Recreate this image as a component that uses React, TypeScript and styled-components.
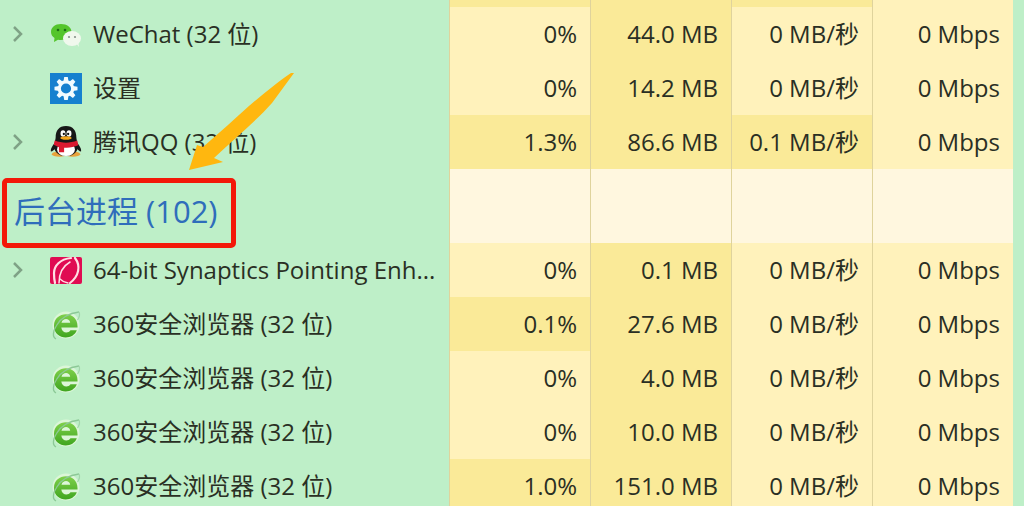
import React from "react";
import styled, { createGlobalStyle } from "styled-components";

const GlobalStyle = createGlobalStyle`
  * { box-sizing: border-box; }
  body {
    margin: 0;
    background: #beefc8;
    color: #2a2f24;
    font-family: "Open Sans", "Noto Sans CJK SC", sans-serif;
  }
`;

const heat = { none: "#fff7df", low: "#fff2bb", high: "#faea98" };
type Heat = keyof typeof heat;

const Window = styled.main`
  height: 100vh;
  padding-right: 11px;
  overflow: hidden;
`;

const Table = styled.table`
  width: 100%;
  table-layout: fixed;
  border-collapse: separate;
  border-spacing: 0;
  font-size: 24px;
  line-height: 30px;
  white-space: nowrap;
`;

const NameCol = styled.col``;
const ValueCol = styled.col`
  width: 141px;
`;

const Row = styled.tr<{ $height: number }>`
  height: ${(p) => p.$height}px;
`;

const NameCell = styled.td`
  padding: 0;
`;

const Name = styled.div`
  display: flex;
  align-items: center;
  padding-left: 8px;
`;

const ValueCell = styled.td<{ $heat: Heat }>`
  padding: 0 13px 0 0;
  text-align: right;
  background: ${(p) => heat[p.$heat]};
  border-left: 1px solid #dfd39c;
`;

const SpacerCell = styled.td<{ $heat: Heat }>`
  padding: 0;
  background: ${(p) => heat[p.$heat]};
  border-left: 1px solid #dfd39c;
`;

const Expander = styled.button`
  display: flex;
  align-items: center;
  justify-content: center;
  width: 20px;
  height: 30px;
  padding: 0;
  border: 0;
  background: none;
  color: #7fa286;
`;

const ExpanderSpace = styled.span`
  width: 20px;
`;

const IconBox = styled.span`
  display: flex;
  width: 32px;
  height: 32px;
  margin: 0 11px 0 22px;
`;

const GroupCell = styled.td`
  position: relative;
  padding: 10px 0 0 14px;
`;

const GroupTitle = styled.h2`
  margin: 0;
  font-size: 31px;
  line-height: 42px;
  font-weight: 400;
  color: #2f6dbb;
`;

const Highlight = styled.div`
  position: absolute;
  top: 9px;
  left: 2px;
  width: 234px;
  height: 70px;
  border: 5px solid #f31809;
  border-radius: 5px;
  pointer-events: none;
`;

const Pointer = styled.svg`
  position: absolute;
  top: -98px;
  left: 188px;
  pointer-events: none;
`;

const WeChatIcon = () => (
  <svg width="32" height="32" viewBox="0 0 32 32" aria-hidden="true">
    <path d="M11 6C5 6 1 9.500 1 14c0 2.500 1.300 4.500 3.500 6L4 24l4-2.300c7 1.300 13.500-2 13.500-7.700C21.500 9.500 17 6 11 6z" fill="#54c52c" />
    <ellipse cx="22" cy="20.500" rx="9" ry="7.500" fill="#f0f8ed" />
    <path d="M26 25l3 4-1-6z" fill="#f0f8ed" />
    <circle cx="8" cy="12" r="1.300" fill="#1d6d16" />
    <circle cx="15" cy="12" r="1.300" fill="#1d6d16" />
    <circle cx="19" cy="19" r="1.100" fill="#87938a" />
    <circle cx="25" cy="19" r="1.100" fill="#87938a" />
  </svg>
);

const SettingsIcon = () => (
  <svg width="32" height="32" viewBox="0 0 32 32" aria-hidden="true">
    <path d="M0 1h32v31H0z" fill="#1680cf" />
    <g transform="translate(16 16.500)">
      {[0, 45, 90, 135, 180, 225, 270, 315].map((a) => (
        <path key={a} d="M-1.800-11.500h3.600l.7 4.500h-5z" fill="#f2fbff" transform={`rotate(${a})`} />
      ))}
      <circle r="6.700" fill="none" stroke="#f2fbff" strokeWidth="3.200" />
    </g>
  </svg>
);

const QQIcon = () => (
  <svg width="32" height="32" viewBox="-1 0 34 34" aria-hidden="true">
    <ellipse cx="9" cy="30" rx="8" ry="2.800" fill="#e8a23c" />
    <ellipse cx="23" cy="30" rx="8" ry="2.800" fill="#e8a23c" />
    <path d="M5 17C1 21-.5 25 0 27c1.500 0 4-2 5-4zM27 17c4 4 5.500 8 5 10-1.500 0-4-2-5-4z" fill="#171717" />
    <path d="M16 0C8.500 0 5 5 5 12c0 2-1 4-1 7-2 7 3 13 12 13s14-6 12-13c0-3-1-5-1-7 0-7-3.500-12-11-12z" fill="#171717" />
    <ellipse cx="16" cy="25" rx="9.500" ry="7" fill="#fff" />
    <ellipse cx="12.800" cy="8" rx="2.600" ry="3.400" fill="#fff" />
    <ellipse cx="19.200" cy="8" rx="2.600" ry="3.400" fill="#fff" />
    <circle cx="13.700" cy="8.500" r="1.200" fill="#111" />
    <circle cx="18.300" cy="8.500" r="1.200" fill="#111" />
    <ellipse cx="16" cy="12.800" rx="6" ry="1.900" fill="#f4a51c" />
    <path d="M4 15.500c8 3 16 3 24 0l1 5c-5 2.200-10 3-15 2.500V28H8.500v-5.500L3 20z" fill="#db1930" />
  </svg>
);

const SynapticsIcon = () => (
  <svg width="32" height="32" viewBox="0 0 32 32" aria-hidden="true">
    <path d="M2 3h28q2 0 2 2v23q0 2-2 2H2q-2 0-2-2V5q0-2 2-2z" fill="#e00b52" />
    <g fill="none" stroke="#ffdfe4" strokeLinecap="round">
      <path d="M21 4C10 5 4 12 4 19c0 3 0 6 1 10" strokeWidth="2.200" />
      <path d="M20 8C13 12 9 18 9 29" strokeWidth="1.500" />
      <path d="M25 4c6 8 4 18-5 25" strokeWidth="2.200" />
      <path d="M10 25c2 2 4 3.500 8 4" strokeWidth="1.400" />
    </g>
  </svg>
);

const BrowserIcon = () => (
  <svg width="32" height="32" viewBox="0 0 32 32" aria-hidden="true">
    <defs>
      <linearGradient id="leaf" x1="0" y1="0" x2="0" y2="1">
        <stop offset="0" stopColor="#7fd04a" />
        <stop offset="1" stopColor="#3fa51f" />
      </linearGradient>
    </defs>
    <circle cx="16" cy="17" r="13.500" fill="#dcf6d8" />
    <path d="M27.500 19.500H11.300c.6 5.500 6.700 6.500 9.200 2.800h6.300C23 33 4 32 4 17.800 4 2.500 28.500 2 27.500 19.500zM11.500 14.700h8.700c-.5-5-7.700-5-8.700 0z" fill="url(#leaf)" fillRule="evenodd" />
    <path d="M6 31c-4-2-3-8 .5-13.500C11 10 19 5 29 4" fill="none" stroke="#8cc896" strokeWidth="1.300" />
    <path d="M29 4c1 2 .5 5-1.500 8" fill="none" stroke="#a2d5aa" strokeWidth="1.200" />
  </svg>
);

interface Process {
  name: string;
  Icon: React.FC;
  expandable?: boolean;
  values: [string, Heat][];
}

const make = (
  name: string,
  Icon: React.FC,
  expandable: boolean,
  cpu: string,
  memory: string,
  disk = "0 MB/秒"
): Process => ({
  name,
  Icon,
  expandable,
  values: [
    [cpu, cpu === "0%" ? "low" : "high"],
    [memory, "high"],
    [disk, disk.startsWith("0 ") ? "low" : "high"],
    ["0 Mbps", "low"],
  ],
});

const apps = [
  make("WeChat (32 位)", WeChatIcon, true, "0%", "44.0 MB"),
  make("设置", SettingsIcon, false, "0%", "14.2 MB"),
  make("腾讯QQ (32 位)", QQIcon, true, "1.3%", "86.6 MB", "0.1 MB/秒"),
];

const background = [
  make("64-bit Synaptics Pointing Enh...", SynapticsIcon, true, "0%", "0.1 MB"),
  make("360安全浏览器 (32 位)", BrowserIcon, false, "0.1%", "27.6 MB"),
  make("360安全浏览器 (32 位)", BrowserIcon, false, "0%", "4.0 MB"),
  make("360安全浏览器 (32 位)", BrowserIcon, false, "0%", "10.0 MB"),
  make("360安全浏览器 (32 位)", BrowserIcon, false, "1.0%", "151.0 MB"),
];

const ProcessRow = ({ name, Icon, expandable, values }: Process) => (
  <Row $height={54}>
    <NameCell>
      <Name>
        {expandable ? (
          <Expander aria-label={name}>
            <svg width="12" height="18" viewBox="0 0 12 18" aria-hidden="true">
              <path d="M2 2l7 7-7 7" fill="none" stroke="currentColor" strokeWidth="2.500" />
            </svg>
          </Expander>
        ) : (
          <ExpanderSpace />
        )}
        <IconBox>
          <Icon />
        </IconBox>
        {name}
      </Name>
    </NameCell>
    {values.map(([text, level], i) => (
      <ValueCell key={i} $heat={level}>
        {text}
      </ValueCell>
    ))}
  </Row>
);

const blank: Heat[] = ["none", "none", "none", "none"];
const leading: Heat[] = ["high", "high", "high", "low"];

export default function App() {
  return (
    <Window>
      <GlobalStyle />
      <Table>
        <colgroup>
          <NameCol />
          <ValueCol />
          <ValueCol />
          <ValueCol />
          <ValueCol />
        </colgroup>
        <tbody>
          <Row $height={7}>
            <NameCell />
            {leading.map((level, i) => (
              <SpacerCell key={i} $heat={level} />
            ))}
          </Row>
          {apps.map((p, i) => (
            <ProcessRow key={i} {...p} />
          ))}
        </tbody>
        <tbody>
          <Row $height={74}>
            <GroupCell>
              <GroupTitle>后台进程 (102)</GroupTitle>
              <Highlight />
              <Pointer width="108" height="100" viewBox="0 0 108 100" aria-hidden="true">
                <path d="M106 2L84 32C68 50 46 68 26 87L35 91L1 99L9 74L15 76L40 54C60 36 76 21 103 2z" fill="#ffb70f" />
              </Pointer>
            </GroupCell>
            {blank.map((level, i) => (
              <SpacerCell key={i} $heat={level} />
            ))}
          </Row>
          {background.map((p, i) => (
            <ProcessRow key={i} {...p} />
          ))}
        </tbody>
      </Table>
    </Window>
  );
}
